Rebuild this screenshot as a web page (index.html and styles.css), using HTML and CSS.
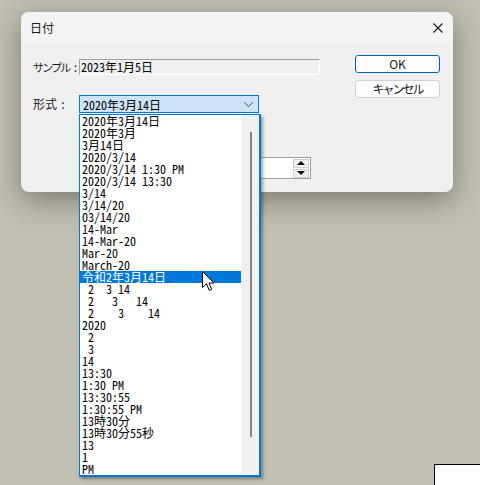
FILE: index.html
```html
<!DOCTYPE html>
<html lang="ja">
<head>
    <meta charset="UTF-8">
    <title>日付</title>
    <link rel="stylesheet" href="styles.css">
</head>
<body>
    <div class="dialog">
        <div class="titlebar">
            <span class="title">日付</span>
            <svg class="close" width="10" height="10" viewBox="0 0 10 10">
                <path d="M0.5 0.5 L9.5 9.5 M9.5 0.5 L0.5 9.5" stroke="#1a1a1a" stroke-width="1.1" fill="none"/>
            </svg>
        </div>
        <div class="content">
            <div class="form">
                <div class="row sample-row">
                    <span class="label"><span class="kana">サンプル</span><span class="colon">:</span></span>
                    <div class="sample">2023年1月5日</div>
                </div>
                <div class="row combo-row">
                    <span class="label">形式<span class="colon">:</span></span>
                    <div class="combo">
                        <span>2020年3月14日</span>
                        <svg width="9" height="5" viewBox="0 0 9 5">
                            <path d="M0.5 0.5 L4.5 4.5 L8.5 0.5" stroke="#444" stroke-width="1" fill="none"/>
                        </svg>
                    </div>
                </div>
                <div class="row spin-row">
                    <div class="spin">
                        <div class="spin-buttons">
                            <div class="spin-btn"><span class="tri up"></span></div>
                            <div class="spin-btn"><span class="tri down"></span></div>
                        </div>
                    </div>
                </div>
            </div>
            <div class="actions">
                <button class="btn default">OK</button>
                <button class="btn"><span class="kana">キャンセル</span></button>
            </div>
        </div>
    </div>

    <div class="dropdown">
        <ul class="items">
            <li>2020年3月14日</li>
            <li>2020年3月</li>
            <li>3月14日</li>
            <li>2020/3/14</li>
            <li>2020/3/14 1:30 PM</li>
            <li>2020/3/14 13:30</li>
            <li>3/14</li>
            <li>3/14/20</li>
            <li>03/14/20</li>
            <li>14-Mar</li>
            <li>14-Mar-20</li>
            <li>Mar-20</li>
            <li>March-20</li>
            <li class="selected">令和2年3月14日</li>
            <li> 2  3 14</li>
            <li> 2   3   14</li>
            <li> 2    3    14</li>
            <li>2020</li>
            <li> 2</li>
            <li> 3</li>
            <li>14</li>
            <li>13:30</li>
            <li>1:30 PM</li>
            <li>13:30:55</li>
            <li>1:30:55 PM</li>
            <li>13時30分</li>
            <li>13時30分55秒</li>
            <li>13</li>
            <li>1</li>
            <li>PM</li>
        </ul>
        <div class="scrollbar"><div class="thumb"></div></div>
    </div>

    <svg class="cursor" width="13" height="21" viewBox="0 0 13 21">
        <path d="M0.5 0.5 L0.5 16.5 L4.5 12.8 L7.2 19.3 L9.6 18.3 L7 12 L12 12 Z" fill="#fff" stroke="#000" stroke-width="1" stroke-linejoin="miter"/>
    </svg>

    <div class="corner-box"></div>
</body>
</html>
```

FILE: styles.css
```css
* {
    margin: 0;
    padding: 0;
    box-sizing: border-box;
}

body {
    width: 480px;
    height: 485px;
    overflow: hidden;
    position: relative;
    background: #c1bfb1;
    font-family: "Noto Sans CJK JP", "Noto Sans", sans-serif;
    font-size: 12px;
    color: #000;
}

.dialog {
    position: absolute;
    left: 21px;
    top: 12px;
    width: 432px;
    height: 180px;
    background: #f0f0f0;
    border-radius: 8px;
    box-shadow: 0 8px 28px rgba(40, 38, 30, 0.45);
    overflow: hidden;
}

.titlebar {
    height: 31px;
    background: #f3f3f3;
    display: flex;
    align-items: center;
    justify-content: space-between;
    padding: 0 10px 0 9px;
}

.title {
    font-size: 12px;
    color: #1a1a1a;
    line-height: 14px;
}

.close {
    display: block;
}

.content {
    display: flex;
    justify-content: space-between;
    padding: 12px 12px 0 12px;
}

.form {
    display: flex;
    flex-direction: column;
    padding-top: 4px;
}

.row {
    display: flex;
    align-items: center;
}

.label {
    width: 46px;
    white-space: nowrap;
    color: #1a1a1a;
    line-height: 14px;
}

.kana {
    font-size: 11px;
    letter-spacing: -1.8px;
}

.colon {
    margin-left: 3px;
    font-feature-settings: "hwid" 1;
}

.sample {
    width: 241px;
    height: 16px;
    border-top: 1px solid #a0a0a0;
    border-left: 1px solid #a0a0a0;
    border-right: 1px solid #fff;
    border-bottom: 1px solid #fff;
    background: #f0f0f0;
    padding-left: 1px;
    line-height: 14px;
    font-feature-settings: "hwid" 1;
}

.combo-row {
    margin-top: 20px;
}

.combo {
    width: 180px;
    height: 18px;
    border: 1px solid #0078d7;
    background: #cce4f7;
    display: flex;
    align-items: center;
    justify-content: space-between;
    padding: 0 5px 0 3px;
    font-feature-settings: "hwid" 1;
}

.combo svg {
    display: block;
}

.spin-row {
    margin-top: 44px;
    padding-left: 46px;
}

.spin {
    width: 232px;
    height: 22px;
    background: #fff;
    border: 1px solid #a0a0a0;
    display: flex;
    justify-content: flex-end;
    align-items: center;
    padding-right: 1px;
}

.spin-buttons {
    display: flex;
    flex-direction: column;
    gap: 1px;
}

.spin-btn {
    width: 16px;
    height: 9px;
    background: #f0f0f0;
    border: 1px solid #cfcfcf;
    display: flex;
    align-items: center;
    justify-content: center;
}

.tri {
    width: 0;
    height: 0;
    border-left: 4px solid transparent;
    border-right: 4px solid transparent;
}

.tri.up {
    border-bottom: 4px solid #000;
}

.tri.down {
    border-top: 4px solid #000;
}

.actions {
    display: flex;
    flex-direction: column;
    gap: 7px;
    margin-right: 1px;
}

.btn {
    width: 85px;
    height: 18px;
    background: #fdfdfd;
    border: 1px solid #d0d0d0;
    border-radius: 3px;
    font-family: "Noto Sans CJK JP", "Noto Sans", sans-serif;
    font-size: 12px;
    line-height: 14px;
    color: #1a1a1a;
}

.btn .kana {
    font-size: 12px;
    letter-spacing: -2px;
}

.btn.default {
    border-color: #0067c0;
}

.dropdown {
    position: absolute;
    left: 79px;
    top: 114px;
    width: 182px;
    height: 363px;
    display: flex;
    background: #fff;
    border: 1px solid #0078d7;
    border-right-width: 2px;
    border-bottom-width: 2px;
    box-shadow: 2px 2px 3px rgba(0, 0, 0, 0.35);
}

.items {
    list-style: none;
    width: 161px;
}

.items li {
    height: 12px;
    line-height: 12px;
    padding-left: 2px;
    white-space: pre;
    font-feature-settings: "hwid" 1;
}

.items li.selected {
    background: #0078d7;
    color: #fff;
}

.scrollbar {
    flex: 1;
    background: #f0f0f0;
    display: flex;
    justify-content: center;
    padding-top: 17px;
}

.thumb {
    width: 2px;
    height: 305px;
    background: #858585;
    margin-left: 1px;
}

.cursor {
    position: absolute;
    left: 202px;
    top: 271px;
}

.corner-box {
    position: absolute;
    left: 434px;
    top: 464px;
    width: 50px;
    height: 30px;
    background: #fff;
    border: 1px solid #000;
}
```
